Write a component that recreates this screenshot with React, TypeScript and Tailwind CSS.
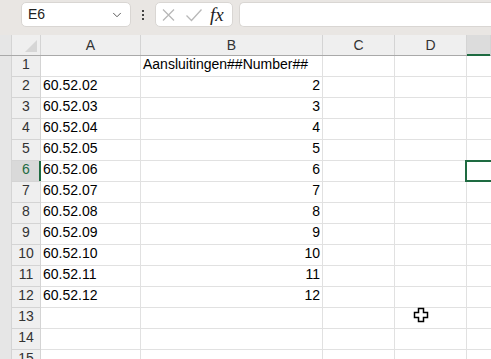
import { ChevronDown } from 'lucide-react';

const cols = ['A', 'B', 'C', 'D', 'E'];

const rows: { a?: string; b?: string }[] = [
  { b: 'Aansluitingen##Number##' },
  ...Array.from({ length: 11 }).map((_, i) => {
    const n = i + 2;
    return { a: `60.52.${String(n).padStart(2, '0')}`, b: String(n) };
  }),
  {},
  {},
  {},
];

const colWidth: Record<string, string> = {
  A: 'w-[100px]',
  B: 'w-[182px]',
  C: 'w-[72px]',
  D: 'w-[72px]',
  E: 'flex-1',
};

function CellCursor() {
  // excel "fat plus" pointer
  return (
    <svg className="absolute left-[413px] top-[307px]" width="17" height="17" viewBox="0 0 17 17">
      <path
        d="M5.5 1.5h5v4h4v5h-4v4h-5v-4h-4v-5h4z"
        fill="#fff"
        stroke="#000"
        strokeWidth="1.5"
      />
    </svg>
  );
}

export default function App() {
  const selectedRow = 6;
  const selectedCol = 'E';

  return (
    <div
      className="relative h-[359px] w-[491px] overflow-hidden bg-white text-[#222]"
      style={{ fontFamily: '"Liberation Sans", Arial, sans-serif' }}
    >
      {/* Formula bar */}
      <div className="flex h-[35px] items-start bg-[#e9e6e3] pt-[2px]">
        <div className="ml-[21px] flex h-[25px] w-[110px] items-center justify-between rounded-[5px] border border-[#d9d6d3] bg-white pl-[6px] pr-[6px]">
          <span className="text-[14px] text-[#222]">E6</span>
          <ChevronDown className="h-[14px] w-[14px] text-[#444]" strokeWidth={1.5} />
        </div>
        <div className="ml-[10px] flex h-[25px] w-[4px] flex-col items-center justify-center gap-[2px]">
          <div className="h-[2px] w-[2px] bg-[#444]" />
          <div className="h-[2px] w-[2px] bg-[#444]" />
          <div className="h-[2px] w-[2px] bg-[#444]" />
        </div>
        <div className="ml-[10px] flex h-[25px] w-[78px] items-center rounded-[5px] border border-[#d9d6d3] bg-white pl-[4px]">
          <svg width="16" height="14" viewBox="0 0 16 14" className="ml-[1px]">
            <path d="M2 1.5l11 11M13 1.5l-11 11" stroke="#b8b8b8" strokeWidth="1.3" fill="none" />
          </svg>
          <svg width="18" height="14" viewBox="0 0 18 14" className="ml-[8px]">
            <path d="M1.5 7.5l5 5 10-11" stroke="#b8b8b8" strokeWidth="1.3" fill="none" />
          </svg>
          <span
            className="ml-[7px] text-[19px] italic leading-none text-[#222]"
            style={{ fontFamily: '"Liberation Serif", "Times New Roman", serif' }}
          >
            fx
          </span>
        </div>
        <div className="ml-[6px] h-[25px] flex-1 rounded-l-[5px] border border-r-0 border-[#d9d6d3] bg-white" />
      </div>

      {/* Column headers */}
      <div className="flex h-[21px] border-b border-[#a9a9a9] bg-[#efefef] text-[14px] text-[#333]">
        <div className="w-[12px] border-r border-[#d4d4d4] bg-[#e6e6e6]" />
        <div className="relative w-[29px] border-r border-[#d4d4d4]">
          <svg className="absolute bottom-[3px] right-[3px]" width="12" height="12" viewBox="0 0 12 12">
            <path d="M12 0v12H0z" fill="#d6d6d6" />
          </svg>
        </div>
        {cols.map(c => (
          <div
            key={c}
            className={`${colWidth[c]} flex items-center justify-center border-r border-[#d4d4d4] ${
              c === selectedCol ? 'relative bg-[#dcdcdc]' : ''
            }`}
          >
            {c === selectedCol ? (
              <div className="absolute -bottom-px left-0 right-0 h-[2px] bg-[#1e6b41]" />
            ) : (
              c
            )}
          </div>
        ))}
      </div>

      {/* Rows */}
      {rows.map((r, i) => {
        const n = i + 1;
        const isSel = n === selectedRow;
        return (
          <div key={n} className="flex h-[21px] text-[14px]">
            <div className="w-[12px] border-r border-[#d4d4d4] bg-[#e6e6e6]" />
            <div
              className={`relative flex w-[29px] items-end justify-center border-b border-r border-[#d4d4d4] pb-[1px] ${
                isSel ? 'bg-[#d9d9d9] text-[#1e6b41]' : 'bg-[#efefef] text-[#333]'
              }`}
            >
              {n}
              {isSel && <div className="absolute -right-px top-0 bottom-0 w-[2px] bg-[#1e6b41]" />}
            </div>
            <div className="flex w-[100px] items-end border-b border-r border-[#e1e1e1] pb-[1px] pl-[2px] text-black">
              {r.a}
            </div>
            <div
              className={`flex w-[182px] items-end border-b border-r border-[#e1e1e1] pb-[1px] text-black ${
                n === 1 ? 'justify-start pl-[2px]' : 'justify-end pr-[2px]'
              }`}
            >
              {r.b}
            </div>
            <div className="w-[72px] border-b border-r border-[#e1e1e1]" />
            <div className="w-[72px] border-b border-r border-[#e1e1e1]" />
            <div className="relative flex-1 border-b border-[#e1e1e1]">
              {isSel && (
                <div className="absolute -left-[2px] -top-px h-[22px] w-[40px] border-2 border-[#1e6b41]" />
              )}
            </div>
          </div>
        );
      })}

      <CellCursor />
    </div>
  );
}
